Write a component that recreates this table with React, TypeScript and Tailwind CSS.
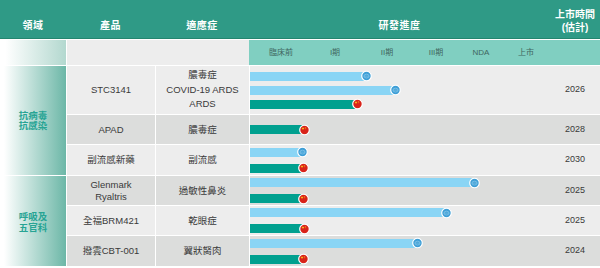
import React from "react";

type Bar = { kind: "blue" | "teal"; w: number };
type Row = {
  product: string[];
  indication: string[];
  bars: Bar[];
  year: string;
  dark: boolean;
  leading: string;
  gap: string;
};

const rows: Row[] = [
  {
    product: ["STC3141"],
    indication: ["膿毒症", "COVID-19 ARDS", "ARDS"],
    bars: [
      { kind: "blue", w: 116 },
      { kind: "blue", w: 145 },
      { kind: "teal", w: 107 },
    ],
    year: "2026",
    dark: false,
    leading: "leading-[14.5px]",
    gap: "gap-[5px]",
  },
  {
    product: ["APAD"],
    indication: ["膿毒症"],
    bars: [{ kind: "teal", w: 54 }],
    year: "2028",
    dark: true,
    leading: "leading-[12px]",
    gap: "gap-[7px]",
  },
  {
    product: ["副流感新藥"],
    indication: ["副流感"],
    bars: [
      { kind: "blue", w: 52 },
      { kind: "teal", w: 53 },
    ],
    year: "2030",
    dark: false,
    leading: "leading-[12px]",
    gap: "gap-[7px]",
  },
  {
    product: ["Glenmark", "Ryaltris"],
    indication: ["過敏性鼻炎"],
    bars: [
      { kind: "blue", w: 224 },
      { kind: "teal", w: 53 },
    ],
    year: "2025",
    dark: true,
    leading: "leading-[12px]",
    gap: "gap-[7px]",
  },
  {
    product: ["全福BRM421"],
    indication: ["乾眼症"],
    bars: [
      { kind: "blue", w: 196 },
      { kind: "teal", w: 54 },
    ],
    year: "2025",
    dark: false,
    leading: "leading-[12px]",
    gap: "gap-[7px]",
  },
  {
    product: ["撥雲CBT-001"],
    indication: ["翼狀胬肉"],
    bars: [
      { kind: "blue", w: 167 },
      { kind: "teal", w: 53 },
    ],
    year: "2024",
    dark: true,
    leading: "leading-[12px]",
    gap: "gap-[7px]",
  },
];

function RedFlag() {
  return (
    <svg width="11" height="11" viewBox="0 0 11 11">
      <circle cx="5.5" cy="5.5" r="4.8" fill="#d8231a" stroke="#ffffff" strokeWidth="1.2" />
      <polygon
        points="4,2.6 4.35,3.6 5.4,3.6 4.55,4.2 4.9,5.2 4,4.6 3.1,5.2 3.45,4.2 2.6,3.6 3.65,3.6"
        fill="#ffd21a"
      />
      <circle cx="6.2" cy="3" r="0.45" fill="#ffd21a" />
      <circle cx="6.8" cy="4.2" r="0.45" fill="#ffd21a" />
    </svg>
  );
}

function BlueFlag() {
  return (
    <svg width="11" height="11" viewBox="0 0 11 11">
      <circle cx="5.5" cy="5.5" r="4.8" fill="#3d9ed6" stroke="#ffffff" strokeWidth="1.2" />
      <ellipse cx="5.5" cy="5.6" rx="2.6" ry="1.9" fill="none" stroke="#8fcbeb" strokeWidth="0.7" />
      <line x1="2.9" y1="5.6" x2="8.1" y2="5.6" stroke="#8fcbeb" strokeWidth="0.6" />
    </svg>
  );
}

function BarLine({ bar }: { bar: Bar }) {
  return (
    <div
      className={`relative h-[9px] ${bar.kind === "blue" ? "bg-[#8ad5f5]" : "bg-[#00a08f]"}`}
      style={{ width: bar.w }}
    >
      <div className="absolute right-[-5.5px] top-1/2 -translate-y-1/2 h-[11px] w-[11px]">
        {bar.kind === "blue" ? <BlueFlag /> : <RedFlag />}
      </div>
    </div>
  );
}

const stages: { label: string; w: string }[] = [
  { label: "臨床前", w: "w-[62px]" },
  { label: "I期", w: "w-[46px]" },
  { label: "II期", w: "w-[58px]" },
  { label: "III期", w: "w-[40px]" },
  { label: "NDA", w: "w-[50px]" },
  { label: "上市", w: "w-[40px]" },
];

export default function App() {
  const font = "font-['Liberation_Sans','Noto_Sans_CJK_TC',sans-serif]";
  return (
    <div className={`w-[600px] h-[268px] bg-white overflow-hidden ${font}`}>
      {/* Header */}
      <div className="flex h-[39px] bg-[#2f9a86] border-b border-[#23866f] text-white text-[10px] font-bold">
        <div className="w-[66px] flex items-end justify-center pb-[5px] tracking-[0.5px]">領域</div>
        <div className="w-[89px] flex items-end justify-center pb-[5px] tracking-[0.5px]">產品</div>
        <div className="w-[94px] flex items-end justify-center pb-[5px] tracking-[0.5px]">適應症</div>
        <div className="w-[301px] flex items-end justify-center pb-[5px] tracking-[0.5px]">研發進度</div>
        <div className="flex-1 flex flex-col items-center justify-center pt-[4px] leading-[13px]">
          <span>上市時間</span>
          <span>(估計)</span>
        </div>
      </div>

      {/* Sub header */}
      <div className="mt-px flex h-[25px]">
        <div className="w-[66px] bg-[linear-gradient(to_right,#ffffff_8%,#b3d8cf)]" />
        <div className="ml-px w-[182px] bg-[#ededed]" />
        <div className="flex-1 bg-[#80cfc1] flex items-center pl-[1px] text-[8px] text-[#3f6660]">
          {stages.map((s) => (
            <span key={s.label} className={`${s.w} text-center`}>
              {s.label}
            </span>
          ))}
        </div>
      </div>

      {/* Body */}
      <div className="mt-px grid grid-cols-[66px_88px_93px_350px] grid-rows-[48px_29px_30px_29px_29px_30px] gap-px bg-white">
        <div className="row-span-3 col-start-1 row-start-1 bg-[linear-gradient(to_right,#ffffff_6%,#6cb7a7)] flex flex-col items-center justify-center pt-[1px] text-[9.5px] leading-[10.5px] font-bold text-[#27a494]">
          <span>抗病毒</span>
          <span>抗感染</span>
        </div>
        <div className="row-span-3 col-start-1 row-start-4 bg-[linear-gradient(to_right,#ffffff_6%,#6cb7a7)] flex flex-col items-center justify-center pt-[1px] text-[9.5px] leading-[11px] font-bold text-[#27a494]">
          <span>呼吸及</span>
          <span>五官科</span>
        </div>
        {rows.map((r, i) => {
          const bg = r.dark ? "bg-[#dcdddc]" : "bg-[#ededed]";
          return (
            <React.Fragment key={i}>
              <div
                className={`${bg} col-start-2 flex flex-col items-center justify-center text-[9.5px] ${r.leading} text-[#3a3a3a]`}
              >
                {r.product.map((p) => (
                  <span key={p}>{p}</span>
                ))}
              </div>
              <div
                className={`${bg} col-start-3 flex flex-col items-center justify-center text-[9.5px] ${r.leading} text-[#3a3a3a]`}
              >
                {r.indication.map((p) => (
                  <span key={p}>{p}</span>
                ))}
              </div>
              <div className={`${bg} col-start-4 flex`}>
                <div className={`w-[300px] flex flex-col justify-center ${r.gap}`}>
                  {r.bars.map((b, j) => (
                    <BarLine key={j} bar={b} />
                  ))}
                </div>
                <div className="flex-1 flex items-center justify-center text-[9px] text-[#3a3a3a]">
                  {r.year}
                </div>
              </div>
            </React.Fragment>
          );
        })}
      </div>
    </div>
  );
}
